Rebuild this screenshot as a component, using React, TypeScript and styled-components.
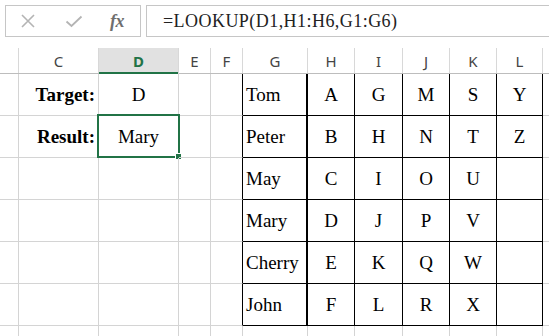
import React from "react";
import styled, { createGlobalStyle } from "styled-components";

const GlobalStyle = createGlobalStyle`
  html, body {
    margin: 0;
    padding: 0;
    background: #fff;
    overflow: hidden;
  }
`;

// column widths B..M (includes the 1px grid line on the right)
const widths = [19, 80, 80, 32, 32, 65, 47, 48, 47, 47, 46, 40];
const letters = ["", "C", "D", "E", "F", "G", "H", "I", "J", "K", "L", ""];

const rows: string[][] = [
  ["", "Target:", "D", "", "", "Tom", "A", "G", "M", "S", "Y", ""],
  ["", "Result:", "Mary", "", "", "Peter", "B", "H", "N", "T", "Z", ""],
  ["", "", "", "", "", "May", "C", "I", "O", "U", "", ""],
  ["", "", "", "", "", "Mary", "D", "J", "P", "V", "", ""],
  ["", "", "", "", "", "Cherry", "E", "K", "Q", "W", "", ""],
  ["", "", "", "", "", "John", "F", "L", "R", "X", "", ""],
  ["", "", "", "", "", "", "", "", "", "", "", ""],
];

export default function App() {
  return (
    <>
      <GlobalStyle />
      <Sheet>
        <FormulaBar>
          <ButtonsBox>
            <IconSlot>
              <svg width="16" height="16" viewBox="0 0 16 16">
                <path d="M2 2 L14 14 M14 2 L2 14" stroke="#b4b4b4" strokeWidth="1.6" fill="none" />
              </svg>
            </IconSlot>
            <IconSlot>
              <svg width="18" height="16" viewBox="0 0 18 16">
                <path d="M1.5 8.5 L6.5 13 L16.5 3.5" stroke="#b4b4b4" strokeWidth="1.8" fill="none" />
              </svg>
            </IconSlot>
            <FxLabel>fx</FxLabel>
          </ButtonsBox>
          <FormulaBox>=LOOKUP(D1,H1:H6,G1:G6)</FormulaBox>
        </FormulaBar>

        <HeaderRow>
          {letters.map((l, i) => (
            <HeaderCell key={i} $w={widths[i]} $selected={l === "D"}>
              {l}
            </HeaderCell>
          ))}
        </HeaderRow>

        <Grid>
          {rows.map((row, r) =>
            row.map((text, c) => {
              const inTable = r < 6;
              const blackRight = inTable && c >= 4 && c <= 10;
              const thickRight = inTable && c === 5;
              const blackBottom = inTable && c >= 5 && c <= 10;
              const align = c === 1 ? "right" : c === 5 ? "left" : "center";
              return (
                <Cell
                  key={`${r}-${c}`}
                  $blackRight={blackRight}
                  $thickRight={thickRight}
                  $blackBottom={blackBottom}
                  $align={align}
                  $bold={c === 1}
                >
                  {text}
                  {r === 1 && c === 2 && (
                    <Selection>
                      <FillHandle />
                    </Selection>
                  )}
                </Cell>
              );
            })
          )}
        </Grid>
      </Sheet>
    </>
  );
}

const Sheet = styled.div`
  width: 549px;
  height: 336px;
  overflow: hidden;
  background: #fff;
`;

const FormulaBar = styled.div`
  height: 48px;
  box-sizing: border-box;
  padding: 5px 0 0 5px;
  display: flex;
  align-items: flex-start;
  gap: 5px;
`;

const ButtonsBox = styled.div`
  width: 136px;
  height: 32px;
  box-sizing: border-box;
  border: 1px solid #c6c6c6;
  display: flex;
  align-items: center;
  padding-left: 13px;
  gap: 28px;
`;

const IconSlot = styled.div`
  display: flex;
  align-items: center;
  justify-content: center;
  width: 18px;
  height: 18px;
`;

const FxLabel = styled.span`
  font-family: "Liberation Serif", serif;
  font-style: italic;
  font-weight: bold;
  font-size: 18px;
  color: #6f6f6f;
  letter-spacing: -0.5px;
  margin-left: -1px;
`;

const FormulaBox = styled.div`
  flex: 1;
  height: 32px;
  box-sizing: border-box;
  border: 1px solid #c6c6c6;
  border-right: none;
  padding-left: 16px;
  display: flex;
  align-items: center;
  font-family: "Liberation Serif", serif;
  font-size: 18px;
  letter-spacing: 0.45px;
  color: #222;
  white-space: nowrap;
`;

const HeaderRow = styled.div`
  display: flex;
  height: 26px;
  box-sizing: border-box;
  border-bottom: 1px solid #bdbdbd;
`;

const HeaderCell = styled.div<{ $w: number; $selected?: boolean }>`
  flex: none;
  width: ${(p) => p.$w}px;
  box-sizing: border-box;
  border-right: 1px solid #d8d8d8;
  display: flex;
  align-items: center;
  justify-content: center;
  font-family: "Noto Sans", "Open Sans", sans-serif;
  font-size: 15px;
  color: ${(p) => (p.$selected ? "#217346" : "#444")};
  font-weight: ${(p) => (p.$selected ? 700 : 400)};
  background: ${(p) => (p.$selected ? "#e1e1e1" : "#fff")};
  box-shadow: ${(p) => (p.$selected ? "inset 0 -2px 0 #217346" : "none")};
  margin-bottom: ${(p) => (p.$selected ? "-1px" : "0")};
`;

const Grid = styled.div`
  display: grid;
  grid-template-columns: ${widths.map((w) => `${w}px`).join(" ")};
  grid-auto-rows: 42px;
`;

const Cell = styled.div<{
  $blackRight?: boolean;
  $thickRight?: boolean;
  $blackBottom?: boolean;
  $align: "left" | "right" | "center";
  $bold?: boolean;
}>`
  position: relative;
  box-sizing: border-box;
  border-right: ${(p) => (p.$thickRight ? 2 : 1)}px solid
    ${(p) => (p.$blackRight ? "#000" : "#d4d4d4")};
  border-bottom: 1px solid ${(p) => (p.$blackBottom ? "#000" : "#d4d4d4")};
  display: flex;
  align-items: center;
  justify-content: ${(p) =>
    p.$align === "left" ? "flex-start" : p.$align === "right" ? "flex-end" : "center"};
  padding: 0 3px;
  font-family: "Liberation Serif", serif;
  font-size: 19px;
  font-weight: ${(p) => (p.$bold ? 700 : 400)};
  color: #000;
  white-space: nowrap;
`;

const Selection = styled.div`
  position: absolute;
  left: -2px;
  top: -2px;
  right: -2px;
  bottom: -1px;
  border: 2px solid #217346;
  pointer-events: none;
`;

const FillHandle = styled.div`
  position: absolute;
  right: -4px;
  bottom: -4px;
  width: 5px;
  height: 5px;
  background: #217346;
  border: 1px solid #fff;
`;
